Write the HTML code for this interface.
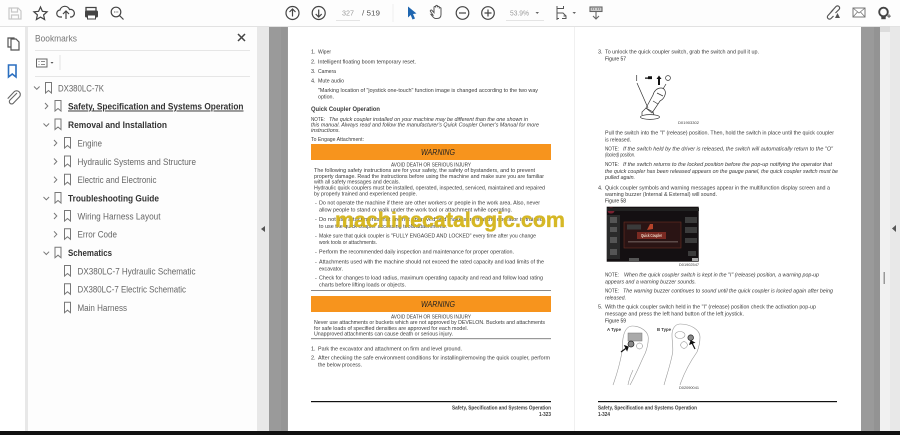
<!DOCTYPE html>
<html lang="en"><head><meta charset="utf-8"><title>PDF viewer</title>
<style>
html,body{margin:0;padding:0;width:900px;height:435px;overflow:hidden;background:#fff}
svg{display:block;position:absolute;left:0;top:0}
text{font-family:"Liberation Sans",sans-serif;white-space:pre}
.t text,.t{font-size:5.5px;fill:#3a3a3a}
.i{font-style:italic}
.b{font-weight:bold;fill:#222}
.bm{font-size:9.6px;fill:#666}
.bb{font-size:9.6px;font-weight:bold;fill:#333}
.ic{fill:none;stroke:#555;stroke-width:1.2}
.bi{fill:none;stroke:#777;stroke-width:1}
.ch{fill:none;stroke:#777;stroke-width:1}
</style></head><body>
<svg width="900" height="435" viewBox="0 0 900 435" xmlns="http://www.w3.org/2000/svg">
<!-- frame -->
<rect width="900" height="435" fill="#fff"/>
<rect x="0" y="0" width="900" height="26" fill="#fdfdfd"/>
<rect x="0" y="26" width="900" height="1" fill="#e2e2e2"/>
<rect x="25" y="27" width="3" height="404" fill="#e8e8e8"/>
<rect x="28" y="27" width="229" height="404" fill="#fdfdfd"/>
<rect x="257" y="27" width="12" height="404" fill="#e8e8e8"/>
<rect x="269" y="27" width="19" height="404" fill="#9a9a9a"/>
<rect x="281" y="27" width="6" height="404" fill="#959595"/>
<rect x="861" y="27" width="19" height="404" fill="#9a9a9a"/>
<rect x="874" y="27" width="6" height="404" fill="#939393"/>
<rect x="880" y="27" width="10" height="404" fill="#f1f1f1"/>
<rect x="880" y="26" width="10" height="6" fill="#dcdcdc"/>
<rect x="890" y="27" width="10" height="404" fill="#e8e8e8"/>
<rect x="574" y="27" width="1" height="404" fill="#f0f0f0"/>
<rect x="883.5" y="272" width="1.5" height="12" fill="#999"/>
<path d="M265 226v6l-4-3z" fill="#555"/>
<path d="M896 225v7l-4-3.500z" fill="#555"/>
<rect x="0" y="431" width="900" height="4" fill="#111"/>

<!-- toolbar left -->
<g class="ic" style="stroke:#c8c8c8"><path d="M9 8h9l3 3v8H9z"/><path d="M11.500 8v4h6V8M11.500 19v-4h7v4"/></g>
<path d="M40.500 7l1.900 4.300 4.700.5-3.500 3.100 1 4.600-4.100-2.400-4.100 2.400 1-4.600-3.500-3.100 4.700-.5z" class="ic" style="stroke:#444"/>
<g class="ic" style="stroke:#444"><path d="M62 17h-1.500a3.500 3.500 0 0 1-.5-7 5 5 0 0 1 9.500-.5 3.800 3.800 0 0 1 2 7.500H70"/><path d="M66 19v-8M63 14l3-3 3 3"/></g>
<g><path d="M86 12V7.500h10V12" fill="none" stroke="#444" stroke-width="1.300"/><rect x="85" y="10.500" width="13" height="7" rx="1.500" fill="#444"/><rect x="87.500" y="15" width="8" height="4" fill="#fff" stroke="#444"/></g>
<g class="ic" style="stroke:#444"><circle cx="116" cy="12" r="4.800"/><path d="M119.500 15.500l4 4"/></g>
<path d="M114 12h.8M115.700 12h.8M117.400 12h.8" stroke="#444" stroke-width="1"/>

<!-- nav rail -->
<g class="ic" style="stroke:#555"><path d="M11 39h5l3 3v8h-8z"/><path d="M11 47H8v-9h6v1"/></g>
<path d="M8.500 65h7.500v12l-3.750-3-3.750 3z" fill="none" stroke="#2b6fc0" stroke-width="1.600"/>
<path d="M17 93l-7 7a2.300 2.300 0 0 0 3.300 3.300l6.200-6.500a3.700 3.700 0 0 0-5.200-5.200l-6.600 7" fill="none" stroke="#666" stroke-width="1.100"/>

<!-- bookmarks header -->
<text x="35" y="41.500" class="bm" style="font-size:9.300px;fill:#777" textLength="42" lengthAdjust="spacingAndGlyphs">Bookmarks</text>
<path d="M238 34l7 7M245 34l-7 7" stroke="#444" stroke-width="1.500"/>
<rect x="35" y="50" width="215" height="1" fill="#e6e6e6"/>
<rect x="36.500" y="59" width="10.500" height="8" fill="none" stroke="#666"/>
<path d="M38.500 61.500h1M41 61.500h4M38.500 64.500h1M41 64.500h4" stroke="#666" stroke-width=".8"/>
<path d="M50.500 62h3l-1.500 1.800z" fill="#555"/>
<rect x="59.500" y="55" width="1" height="15" fill="#e4e4e4"/>
<rect x="35" y="76" width="215" height="1" fill="#e6e6e6"/>

<!-- bookmarks tree -->
<defs><path id="bk" d="M-3 -5.500h6v10.500l-3-2.500-3 2.500z"/></defs>
<g class="ch">
<path d="M34 86.500l2.800 2.800 2.800-2.800"/>
<path d="M45 103l2.800 3-2.800 3"/>
<path d="M43.500 123.500l2.800 2.800 2.800-2.800"/>
<path d="M54 140l2.800 3-2.800 3"/>
<path d="M54 158.500l2.800 3-2.800 3"/>
<path d="M54 176.700l2.800 3-2.800 3"/>
<path d="M43.500 197l2.800 2.800 2.800-2.800"/>
<path d="M54 213l2.800 3-2.800 3"/>
<path d="M54 231.300l2.800 3-2.800 3"/>
<path d="M43.500 251.700l2.800 2.800 2.800-2.800"/>
</g>
<g class="bi">
<use href="#bk" x="48.500" y="88"/>
<use href="#bk" x="58" y="106"/>
<use href="#bk" x="58" y="124.500"/>
<use href="#bk" x="67.500" y="143"/>
<use href="#bk" x="67.500" y="161.500"/>
<use href="#bk" x="67.500" y="179.700"/>
<use href="#bk" x="58" y="198"/>
<use href="#bk" x="67.500" y="216"/>
<use href="#bk" x="67.500" y="234.300"/>
<use href="#bk" x="58" y="252.700"/>
<use href="#bk" x="67.500" y="271"/>
<use href="#bk" x="67.500" y="289.300"/>
<use href="#bk" x="67.500" y="307.700"/>
</g>
<text x="58" y="91.300" class="bm" textLength="46" lengthAdjust="spacingAndGlyphs">DX380LC-7K</text>
<text x="68" y="109.500" class="bb" textLength="175.500" lengthAdjust="spacingAndGlyphs" text-decoration="underline">Safety, Specification and Systems Operation</text>
<text x="68" y="128" class="bb" textLength="99" lengthAdjust="spacingAndGlyphs">Removal and Installation</text>
<text x="77.500" y="146.300" class="bm" textLength="24.500" lengthAdjust="spacingAndGlyphs">Engine</text>
<text x="77.500" y="164.800" class="bm" textLength="118.500" lengthAdjust="spacingAndGlyphs">Hydraulic Systems and Structure</text>
<text x="77.500" y="183" class="bm" textLength="79" lengthAdjust="spacingAndGlyphs">Electric and Electronic</text>
<text x="68" y="201.500" class="bb" textLength="91" lengthAdjust="spacingAndGlyphs">Troubleshooting Guide</text>
<text x="77.500" y="219.300" class="bm" textLength="83" lengthAdjust="spacingAndGlyphs">Wiring Harness Layout</text>
<text x="77.500" y="237.600" class="bm" textLength="39.500" lengthAdjust="spacingAndGlyphs">Error Code</text>
<text x="68" y="256" class="bb" textLength="44" lengthAdjust="spacingAndGlyphs">Schematics</text>
<text x="77.500" y="274.300" class="bm" textLength="118" lengthAdjust="spacingAndGlyphs">DX380LC-7 Hydraulic Schematic</text>
<text x="77.500" y="292.600" class="bm" textLength="108.500" lengthAdjust="spacingAndGlyphs">DX380LC-7 Electric Schematic</text>
<text x="77.500" y="311" class="bm" textLength="49.500" lengthAdjust="spacingAndGlyphs">Main Harness</text>

<!-- toolbar center -->
<g class="ic" style="stroke:#444">
<circle cx="292.500" cy="13" r="6.500"/><path d="M292.500 16.500v-7M289.500 12l3-3 3 3"/>
<circle cx="318.700" cy="13" r="6.500"/><path d="M318.700 9.500v7M315.700 14l3 3 3-3"/>
</g>
<rect x="336" y="20" width="24" height="1" fill="#e4e4e4"/>
<text x="342" y="15.500" style="font-size:7.500px;fill:#999" textLength="12" lengthAdjust="spacingAndGlyphs">327</text>
<text x="362" y="15.500" style="font-size:7.500px;fill:#555" textLength="18" lengthAdjust="spacingAndGlyphs">/ 519</text>
<rect x="392.500" y="4" width="1" height="18" fill="#eee"/>
<path d="M408 6.500l8.500 7-3.500.5 2 4.500-2.500 1-1.800-4.500-2.700 2.500z" fill="#1f66b0"/>
<g class="ic" style="stroke:#555;stroke-width:1"><path d="M433 15l-2.500-3.500c-.8-1.200.8-2 1.600-1l1.900 2.200V7.500c0-1.300 1.700-1.300 1.700 0V6.300c0-1.300 1.800-1.300 1.800 0v1c0-1.200 1.800-1.200 1.800 0v1.200c0-1.100 1.700-1.100 1.700 0v6c0 2.500-1.500 4-4 4h-1.500c-1.500 0-2.500-1.500-4.500-4z"/></g>
<g class="ic" style="stroke:#444">
<circle cx="462.500" cy="13" r="6.300"/><path d="M459 13h7"/>
<circle cx="488" cy="13" r="6.300"/><path d="M484.500 13h7M488 9.500v7"/>
</g>
<text x="510" y="15.500" style="font-size:7.500px;fill:#999" textLength="19" lengthAdjust="spacingAndGlyphs">53.9%</text>
<path d="M535.500 12h3.500l-1.750 2z" fill="#666"/>
<rect x="506" y="20" width="38" height="1" fill="#e4e4e4"/>
<g fill="none" stroke="#555" stroke-width="1">
<path d="M557 6v2.500h6.500V6M557 8.500v10M557 13h6l3 3v2.500h-4M557 20v-1.500h2"/>
<path d="M563.500 16h3"/>
</g>
<path d="M572.500 12h3.500l-1.750 2z" fill="#666"/>
<g fill="none" stroke="#666" stroke-width="1.100"><rect x="590" y="7" width="12" height="4.500" fill="#ccc"/><path d="M596 12v7M593 16l3 3 3-3M592 9h1M594 9h1M597 9h1M599 9h1"/></g>

<!-- toolbar right -->
<g fill="none" stroke="#555" stroke-width="1.200">
<path d="M833 10l-5 5.500a2 2 0 0 0 3 3l2.500-2.500"/>
<path d="M831 12l5-5.500a2 2 0 0 1 3 3l-3.500 3.500"/>
</g>
<path d="M835 18l2.500-5 2.500 5z" fill="#555"/>
<rect x="853" y="8" width="12" height="9" fill="#fff" stroke="#777"/>
<path d="M853 8l6 5 6-5M853 17l4.500-5M865 17l-4.500-5" fill="none" stroke="#777" stroke-width=".8"/>
<circle cx="883.500" cy="12" r="4.300" fill="none" stroke="#444" stroke-width="1.900"/>
<rect x="881.300" y="16" width="4.400" height="3.200" fill="#444"/>
<path d="M889 14.300v3.600M887.200 16.100h3.600" stroke="#555" stroke-width="1"/>

<!-- LEFT PAGE -->
<g class="t">
<text x="311" y="53.500">1.</text><text x="318" y="53.500" textLength="13" lengthAdjust="spacingAndGlyphs">Wiper</text>
<text x="311" y="63.500">2.</text><text x="318" y="63.500" textLength="98" lengthAdjust="spacingAndGlyphs">Intelligent floating boom temporary reset.</text>
<text x="311" y="73">3.</text><text x="318" y="73" textLength="18" lengthAdjust="spacingAndGlyphs">Camera</text>
<text x="311" y="82.500">4.</text><text x="318" y="82.500" textLength="26" lengthAdjust="spacingAndGlyphs">Mute audio</text>
<text x="318" y="92" textLength="220" lengthAdjust="spacingAndGlyphs">"Marking location of "joystick one-touch" function image is changed according to the two way</text>
<text x="318" y="98.700" textLength="16" lengthAdjust="spacingAndGlyphs">option.</text>
<text x="311" y="111" class="b" style="font-size:6.600px" textLength="69" lengthAdjust="spacingAndGlyphs">Quick Coupler Operation</text>
<text x="311" y="121" textLength="14" lengthAdjust="spacingAndGlyphs">NOTE:</text>
<text x="329" y="121" class="i" textLength="199" lengthAdjust="spacingAndGlyphs">The quick coupler installed on your machine may be different than the one shown in</text>
<text x="311" y="126.700" class="i" textLength="228" lengthAdjust="spacingAndGlyphs">this manual. Always read and follow the manufacturer's Quick Coupler Owner's Manual for more</text>
<text x="311" y="132" class="i" textLength="29" lengthAdjust="spacingAndGlyphs">instructions.</text>
<text x="311" y="141" textLength="53" lengthAdjust="spacingAndGlyphs">To Engage Attachment:</text>
</g>
<rect x="311" y="144" width="240" height="16" fill="#f7941d"/>
<text x="421" y="155" class="i" style="font-size:7.800px;fill:#222" textLength="34" lengthAdjust="spacingAndGlyphs">WARNING</text>
<g class="t">
<text x="391" y="166.700" textLength="80" lengthAdjust="spacingAndGlyphs">AVOID DEATH OR SERIOUS INJURY</text>
<text x="314" y="172" textLength="221" lengthAdjust="spacingAndGlyphs">The following safety instructions are for your safety, the safety of bystanders, and to prevent</text>
<text x="314" y="178" textLength="230" lengthAdjust="spacingAndGlyphs">property damage. Read the instructions before using the machine and make sure you are familiar</text>
<text x="314" y="183.700" textLength="86" lengthAdjust="spacingAndGlyphs">with all safety messages and decals.</text>
<text x="314" y="189.700" textLength="231" lengthAdjust="spacingAndGlyphs">Hydraulic quick couplers must be installed, operated, inspected, serviced, maintained and repaired</text>
<text x="314" y="195.700" textLength="103" lengthAdjust="spacingAndGlyphs">by properly trained and experienced people.</text>
<text x="315" y="204.300">-</text><text x="319" y="204.300" textLength="221" lengthAdjust="spacingAndGlyphs">Do not operate the machine if there are other workers or people in the work area. Also, never</text>
<text x="319" y="211.300" textLength="193" lengthAdjust="spacingAndGlyphs">allow people to stand or walk under the work tool or attachment while operating.</text>
<text x="315" y="221">-</text><text x="319" y="221" textLength="224" lengthAdjust="spacingAndGlyphs">Do not use attachments that are not approved and make sure that the operator is trained</text>
<text x="319" y="228" textLength="128" lengthAdjust="spacingAndGlyphs">to use the quick coupler accessing tools/attachments.</text>
<text x="315" y="237.300">-</text><text x="319" y="237.300" textLength="217" lengthAdjust="spacingAndGlyphs">Make sure that quick coupler is "FULLY ENGAGED AND LOCKED" every time after you change</text>
<text x="319" y="244" textLength="58" lengthAdjust="spacingAndGlyphs">work tools or attachments.</text>
<text x="315" y="253.700">-</text><text x="319" y="253.700" textLength="195" lengthAdjust="spacingAndGlyphs">Perform the recommended daily inspection and maintenance for proper operation.</text>
<text x="315" y="263.300">-</text><text x="319" y="263.300" textLength="225" lengthAdjust="spacingAndGlyphs">Attachments used with the machine should not exceed the rated capacity and load limits of the</text>
<text x="319" y="270.300" textLength="24" lengthAdjust="spacingAndGlyphs">excavator.</text>
<text x="315" y="279.700">-</text><text x="319" y="279.700" textLength="224" lengthAdjust="spacingAndGlyphs">Check for changes to load radius, maximum operating capacity and read and follow load rating</text>
<text x="319" y="286.700" textLength="87" lengthAdjust="spacingAndGlyphs">charts before lifting loads or objects.</text>
</g>
<rect x="311" y="290" width="240" height="1" fill="#888"/>
<rect x="311" y="296" width="240" height="16" fill="#f7941d"/>
<text x="421" y="307" class="i" style="font-size:7.800px;fill:#222" textLength="34" lengthAdjust="spacingAndGlyphs">WARNING</text>
<g class="t">
<text x="391" y="318.300" textLength="80" lengthAdjust="spacingAndGlyphs">AVOID DEATH OR SERIOUS INJURY</text>
<text x="314" y="324" textLength="231" lengthAdjust="spacingAndGlyphs">Never use attachments or buckets which are not approved by DEVELON. Buckets and attachments</text>
<text x="314" y="330" textLength="154" lengthAdjust="spacingAndGlyphs">for safe loads of specified densities are approved for each model.</text>
<text x="314" y="335.700" textLength="139" lengthAdjust="spacingAndGlyphs">Unapproved attachments can cause death or serious injury.</text>
</g>
<rect x="311" y="338" width="240" height="1.200" fill="#999"/>
<g class="t">
<text x="311" y="350.300">1.</text><text x="318" y="350.300" textLength="144" lengthAdjust="spacingAndGlyphs">Park the excavator and attachment on firm and level ground.</text>
<text x="311" y="359.700">2.</text><text x="318" y="359.700" textLength="232" lengthAdjust="spacingAndGlyphs">After checking the safe environment conditions for installing/removing the quick coupler, perform</text>
<text x="318" y="366.700" textLength="44" lengthAdjust="spacingAndGlyphs">the below process.</text>
</g>
<rect x="311" y="401" width="240" height="1.200" fill="#111"/>
<g class="t">
<text x="452" y="409.300" class="b" textLength="99" lengthAdjust="spacingAndGlyphs">Safety, Specification and Systems Operation</text>
<text x="539" y="416" class="b" textLength="12" lengthAdjust="spacingAndGlyphs">1-323</text>
</g>

<!-- RIGHT PAGE -->
<g class="t">
<text x="598" y="53.700">3.</text><text x="605" y="53.700" textLength="154" lengthAdjust="spacingAndGlyphs">To unlock the quick coupler switch, grab the switch and pull it up.</text>
<text x="605" y="60.300" textLength="21" lengthAdjust="spacingAndGlyphs" style="fill:#222">Figure 57</text>
<text x="678" y="124" style="font-size:3.600px" textLength="21" lengthAdjust="spacingAndGlyphs">D01903302</text>
<text x="605" y="134.300" textLength="229" lengthAdjust="spacingAndGlyphs">Pull the switch into the "I" (release) position. Then, hold the switch in place until the quick coupler</text>
<text x="605" y="141.300" textLength="26" lengthAdjust="spacingAndGlyphs">is released.</text>
<text x="605" y="150.300" textLength="14" lengthAdjust="spacingAndGlyphs">NOTE:</text>
<text x="623" y="150.300" class="i" textLength="210" lengthAdjust="spacingAndGlyphs">If the switch held by the driver is released, the switch will automatically return to the "O"</text>
<text x="605" y="156.700" class="i" textLength="30" lengthAdjust="spacingAndGlyphs">(locked) position.</text>
<text x="605" y="166" textLength="14" lengthAdjust="spacingAndGlyphs">NOTE:</text>
<text x="623" y="166" class="i" textLength="209" lengthAdjust="spacingAndGlyphs">If the switch returns to the locked position before the pop-up notifying the operator that</text>
<text x="605" y="173" class="i" textLength="233" lengthAdjust="spacingAndGlyphs">the quick coupler has been released appears on the gauge panel, the quick coupler switch must be</text>
<text x="605" y="179" class="i" textLength="30" lengthAdjust="spacingAndGlyphs">pulled again.</text>
<text x="598" y="189.300">4.</text><text x="605" y="189.300" textLength="225" lengthAdjust="spacingAndGlyphs">Quick coupler symbols and warning messages appear in the multifunction display screen and a</text>
<text x="605" y="196" textLength="112" lengthAdjust="spacingAndGlyphs">warning buzzer (Internal &amp; External) will sound.</text>
<text x="605" y="202.700" textLength="21" lengthAdjust="spacingAndGlyphs" style="fill:#222">Figure 58</text>
<text x="679" y="266" style="font-size:3.600px" textLength="20" lengthAdjust="spacingAndGlyphs">D01902547</text>
<text x="605" y="276.300" textLength="14" lengthAdjust="spacingAndGlyphs">NOTE:</text>
<text x="624" y="276.300" class="i" textLength="195" lengthAdjust="spacingAndGlyphs">When the quick coupler switch is kept in the "I" (release) position, a warning pop-up</text>
<text x="605" y="283.300" class="i" textLength="91" lengthAdjust="spacingAndGlyphs">appears and a warning buzzer sounds.</text>
<text x="605" y="292.300" textLength="14" lengthAdjust="spacingAndGlyphs">NOTE:</text>
<text x="623" y="292.300" class="i" textLength="210" lengthAdjust="spacingAndGlyphs">The warning buzzer continues to sound until the quick coupler is locked again after being</text>
<text x="605" y="299.300" class="i" textLength="21" lengthAdjust="spacingAndGlyphs">released.</text>
<text x="598" y="308.700">5.</text><text x="605" y="308.700" textLength="211" lengthAdjust="spacingAndGlyphs">With the quick coupler switch held in the "I" (release) position check the activation pop-up</text>
<text x="605" y="315.700" textLength="139" lengthAdjust="spacingAndGlyphs">message and press the left hand button of the left joystick.</text>
<text x="605" y="322.300" textLength="21" lengthAdjust="spacingAndGlyphs" style="fill:#222">Figure 59</text>
<text x="607" y="331" class="b" style="font-size:4.500px" textLength="14" lengthAdjust="spacingAndGlyphs">A Type</text>
<text x="657" y="331" class="b" style="font-size:4.500px" textLength="14" lengthAdjust="spacingAndGlyphs">B Type</text>
<text x="679" y="389" style="font-size:3.600px" textLength="20" lengthAdjust="spacingAndGlyphs">D02090041</text>
</g>
<rect x="598" y="401" width="239" height="1.200" fill="#111"/>
<g class="t">
<text x="598" y="409.300" class="b" textLength="99" lengthAdjust="spacingAndGlyphs">Safety, Specification and Systems Operation</text>
<text x="598" y="416" class="b" textLength="12" lengthAdjust="spacingAndGlyphs">1-324</text>
</g>

<!-- Figure 57 -->
<g fill="none" stroke="#333" stroke-width=".7">
<path d="M636.700 75v6"/>
<circle cx="668" cy="78" r="2.400"/>
<path d="M637 83l11 25M666 84l-3 5"/>
<path d="M646 108l7-13c1-4 4-7 8-7s5 4 4 7c-1 3-3 5-5 6l-8 12z"/>
<path d="M657 93l6 3M653 101l5 3"/>
<ellipse cx="650" cy="117" rx="9.500" ry="2.400"/>
<path d="M642 115v-3l4-4 7 4 1 3"/>
</g>
<path d="M645 77.500h3v-1.200h4v2.800h-4v-.4h-3z" fill="#111"/>
<path d="M659 75.500l2.500 3.500h-1.500v6h-2v-6h-1.500z" fill="#111"/>

<!-- Figure 58 -->
<rect x="606.700" y="206.700" width="92" height="55" fill="#141012"/>
<rect x="607.500" y="207.500" width="7" height="6" rx="3" fill="#7a2030"/>
<rect x="607" y="215" width="13" height="44" fill="#2a2a2a"/>
<g fill="#555"><rect x="610" y="217" width="7" height="6"/><rect x="610" y="227" width="7" height="5"/><rect x="610" y="237" width="7" height="6"/><rect x="610" y="249" width="7" height="6"/></g>
<rect x="624" y="222" width="57" height="26" fill="#2a1414" stroke="#6d2e22" stroke-width=".6"/>
<rect x="627" y="224.500" width="14" height="5" fill="#3a3a3a"/>
<path d="M650 224h3v5l-6 1z" fill="#b5432a"/>
<rect x="637" y="232" width="29" height="7" fill="#7a2a22"/>
<text x="641" y="237.200" style="font-size:4.500px;fill:#e8d8c8;font-weight:bold" textLength="21" lengthAdjust="spacingAndGlyphs">Quick Coupler</text>
<rect x="628" y="241" width="50" height="1.500" fill="#5c4a48"/>
<g fill="#3c3c3c"><rect x="685" y="217" width="12" height="6"/><rect x="685" y="227" width="12" height="6"/><rect x="685" y="238" width="12" height="5"/><rect x="688" y="251" width="8" height="5"/></g>
<rect x="607" y="208" width="92" height="3" fill="#222"/>
<rect x="629" y="258" width="10" height="3" fill="#555"/>
<rect x="692" y="258" width="6" height="3" fill="#aaa"/>

<!-- Figure 59 -->
<g fill="none" stroke="#999" stroke-width=".6">
<path d="M613 385c4-11 7-22 9-33 1-5 0-10 1.300-15 1-6 4-11 9-11 9 0 16 6 16 12 0 6-1 10-3 15-5 10-9 21-15.300 32"/>
<path d="M628 385c1-6 3-11 5-15"/>
<path d="M664 385c3-11 7-22 8.700-33 .5-6-.7-11-.7-17 0-6 3-11 8-11 11 0 20 6 20 13 0 6-1 10-3 15-7 10-13 21-17 33"/>
<ellipse cx="680" cy="335" rx="5" ry="3.500"/>
</g>
<rect x="628" y="333" width="14" height="8" fill="#aaa" stroke="#777" stroke-width=".5"/>
<circle cx="631" cy="344" r="3" fill="#888" stroke="#222" stroke-width=".7"/>
<circle cx="639.500" cy="346" r="3" fill="#fff" stroke="#777" stroke-width=".5"/>
<path d="M621 352l6-4.500M625 346l3 1-1 3z" stroke="#111" stroke-width="1.200" fill="#111"/>
<circle cx="690.700" cy="337.700" r="2.800" fill="#888" stroke="#222" stroke-width=".7"/>
<circle cx="684" cy="345" r="3.300" fill="#fff" stroke="#777" stroke-width=".5"/>
<path d="M695 349l-3.500-7M690 344l1-3 3 1.500z" stroke="#111" stroke-width="1.200" fill="#111"/>

<!-- watermark -->
<text x="335" y="227" style="font-size:21.500px;font-weight:bold;fill:#d4b41a;stroke:#d4b41a;stroke-width:.35;fill-opacity:.95" textLength="230" lengthAdjust="spacingAndGlyphs">machinecatalogic.com</text>
</svg>
</body></html>
